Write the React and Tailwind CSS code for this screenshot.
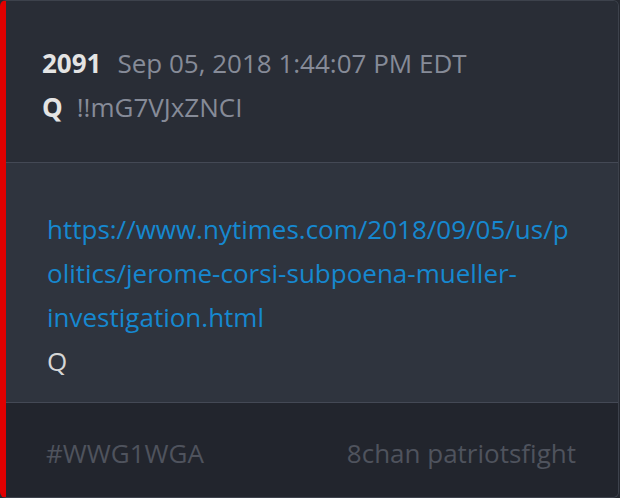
export default function App() {
  return (
    <div className="w-[620px] h-[498px] bg-[#262931]" style={{ fontFamily: '"Open Sans", sans-serif' }}>
      <div className="h-[498px] w-[619px] flex flex-col overflow-hidden rounded-[6px] border border-[#3d424c] border-l-[6px] border-l-[#e00000] bg-[#292d36]">
        <div className="h-[161px] shrink-0 bg-[#292d36] pl-[36px] pt-[40px] text-[26px] leading-[44px]">
          <div>
            <span className="font-bold text-[#e4e4e4]">2091</span>
            <span className="ml-[16px] text-[#868b98]">Sep 05, 2018 1:44:07 PM EDT</span>
          </div>
          <div>
            <span className="font-bold text-[#e4e4e4]">Q</span>
            <span className="ml-[14px] text-[#868b98]">!!mG7VJxZNCI</span>
          </div>
        </div>
        <div className="h-px bg-[#444955] shrink-0" />
        <div className="h-[239px] shrink-0 bg-[#2f343e] pl-[41px] pr-[45px] pt-[44px] text-[26px] leading-[44px]">
          <div className="break-words text-[#1688d0]">https://www.nytimes.com/2018/09/05/us/politics/jerome-corsi-subpoena-mueller-investigation.html</div>
          <div className="text-[#d6d6d6]">Q</div>
        </div>
        <div className="h-px bg-[#444955] shrink-0" />
        <div className="flex-1 bg-[#22252d] flex justify-between items-start pl-[40px] pr-[42px] pt-[28px] text-[26px] leading-[44px] text-[#4f535d]">
          <span>#WWG1WGA</span>
          <span>8chan patriotsfight</span>
        </div>
      </div>
    </div>
  );
}
